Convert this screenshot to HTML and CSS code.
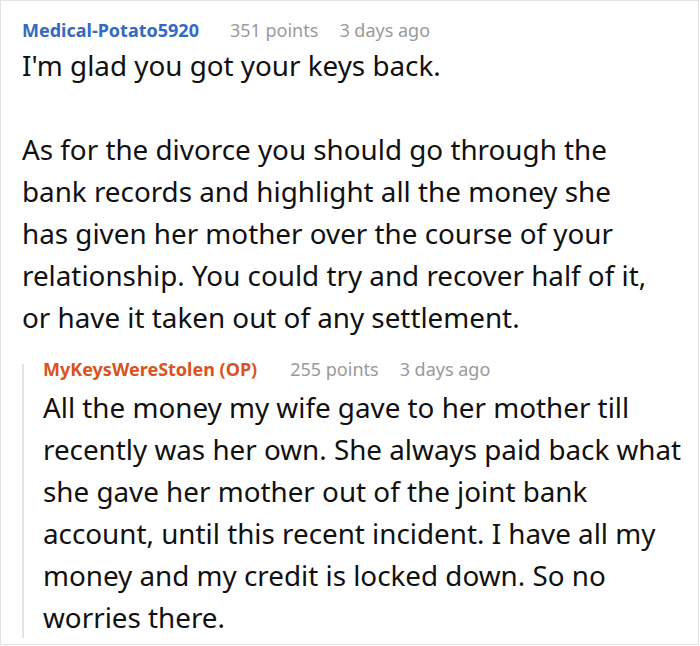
FILE: index.html
```html
<!DOCTYPE html>
<html>
<head>
<meta charset="utf-8">
<link rel="stylesheet" href="styles.css">
</head>
<body>
<div class="card">
  <div class="comment">
    <div class="meta">
      <span class="user">Medical-Potato5920</span>
      <span class="info">351 points</span>
      <span class="info">3 days ago</span>
    </div>
    <p class="text main">I'm glad you got your keys back.<br><br>As for the divorce you should go through the bank records and highlight all the money she has given her mother over the course of your relationship. You could try and recover half of it, or have it taken out of any settlement.</p>
    <div class="reply">
      <div class="meta">
        <span class="user op">MyKeysWereStolen (OP)</span>
        <span class="info">255 points</span>
        <span class="info">3 days ago</span>
      </div>
      <p class="text">All the money my wife gave to her mother till recently was her own. She always paid back what she gave her mother out of the joint bank account, until this recent incident. I have all my money and my credit is locked down. So no worries there.</p>
    </div>
  </div>
</div>
</body>
</html>
```
FILE: styles.css
```css
html, body { margin: 0; padding: 0; background: #fff; }
.card {
  width: 699px;
  height: 645px;
  box-sizing: border-box;
  border: 1px solid #e3e3e3;
  padding: 15px 4px 0 21px;
  overflow: hidden;
  font-family: "Noto Sans", "Open Sans", sans-serif;
}
.meta {
  display: flex;
  gap: 21px;
  font-size: 18px;
  line-height: 28px;
}
.user { font-weight: 700; color: #3369c2; margin-right: 10px; }
.user.op { color: #d9531e; margin-right: 12px; }
.info { color: #9a9a9a; }
.text {
  margin: 0;
  font-size: 27.8px;
  line-height: 42px;
  color: #111;
}
.text.main { padding-right: 32px; }
.reply {
  margin-top: 17px;
  padding-left: 21px;
  background: linear-gradient(#e4e4e4, #e4e4e4) no-repeat 0 9px / 2px calc(100% - 9px);
}
.reply .meta { margin-bottom: 3px; }
```
